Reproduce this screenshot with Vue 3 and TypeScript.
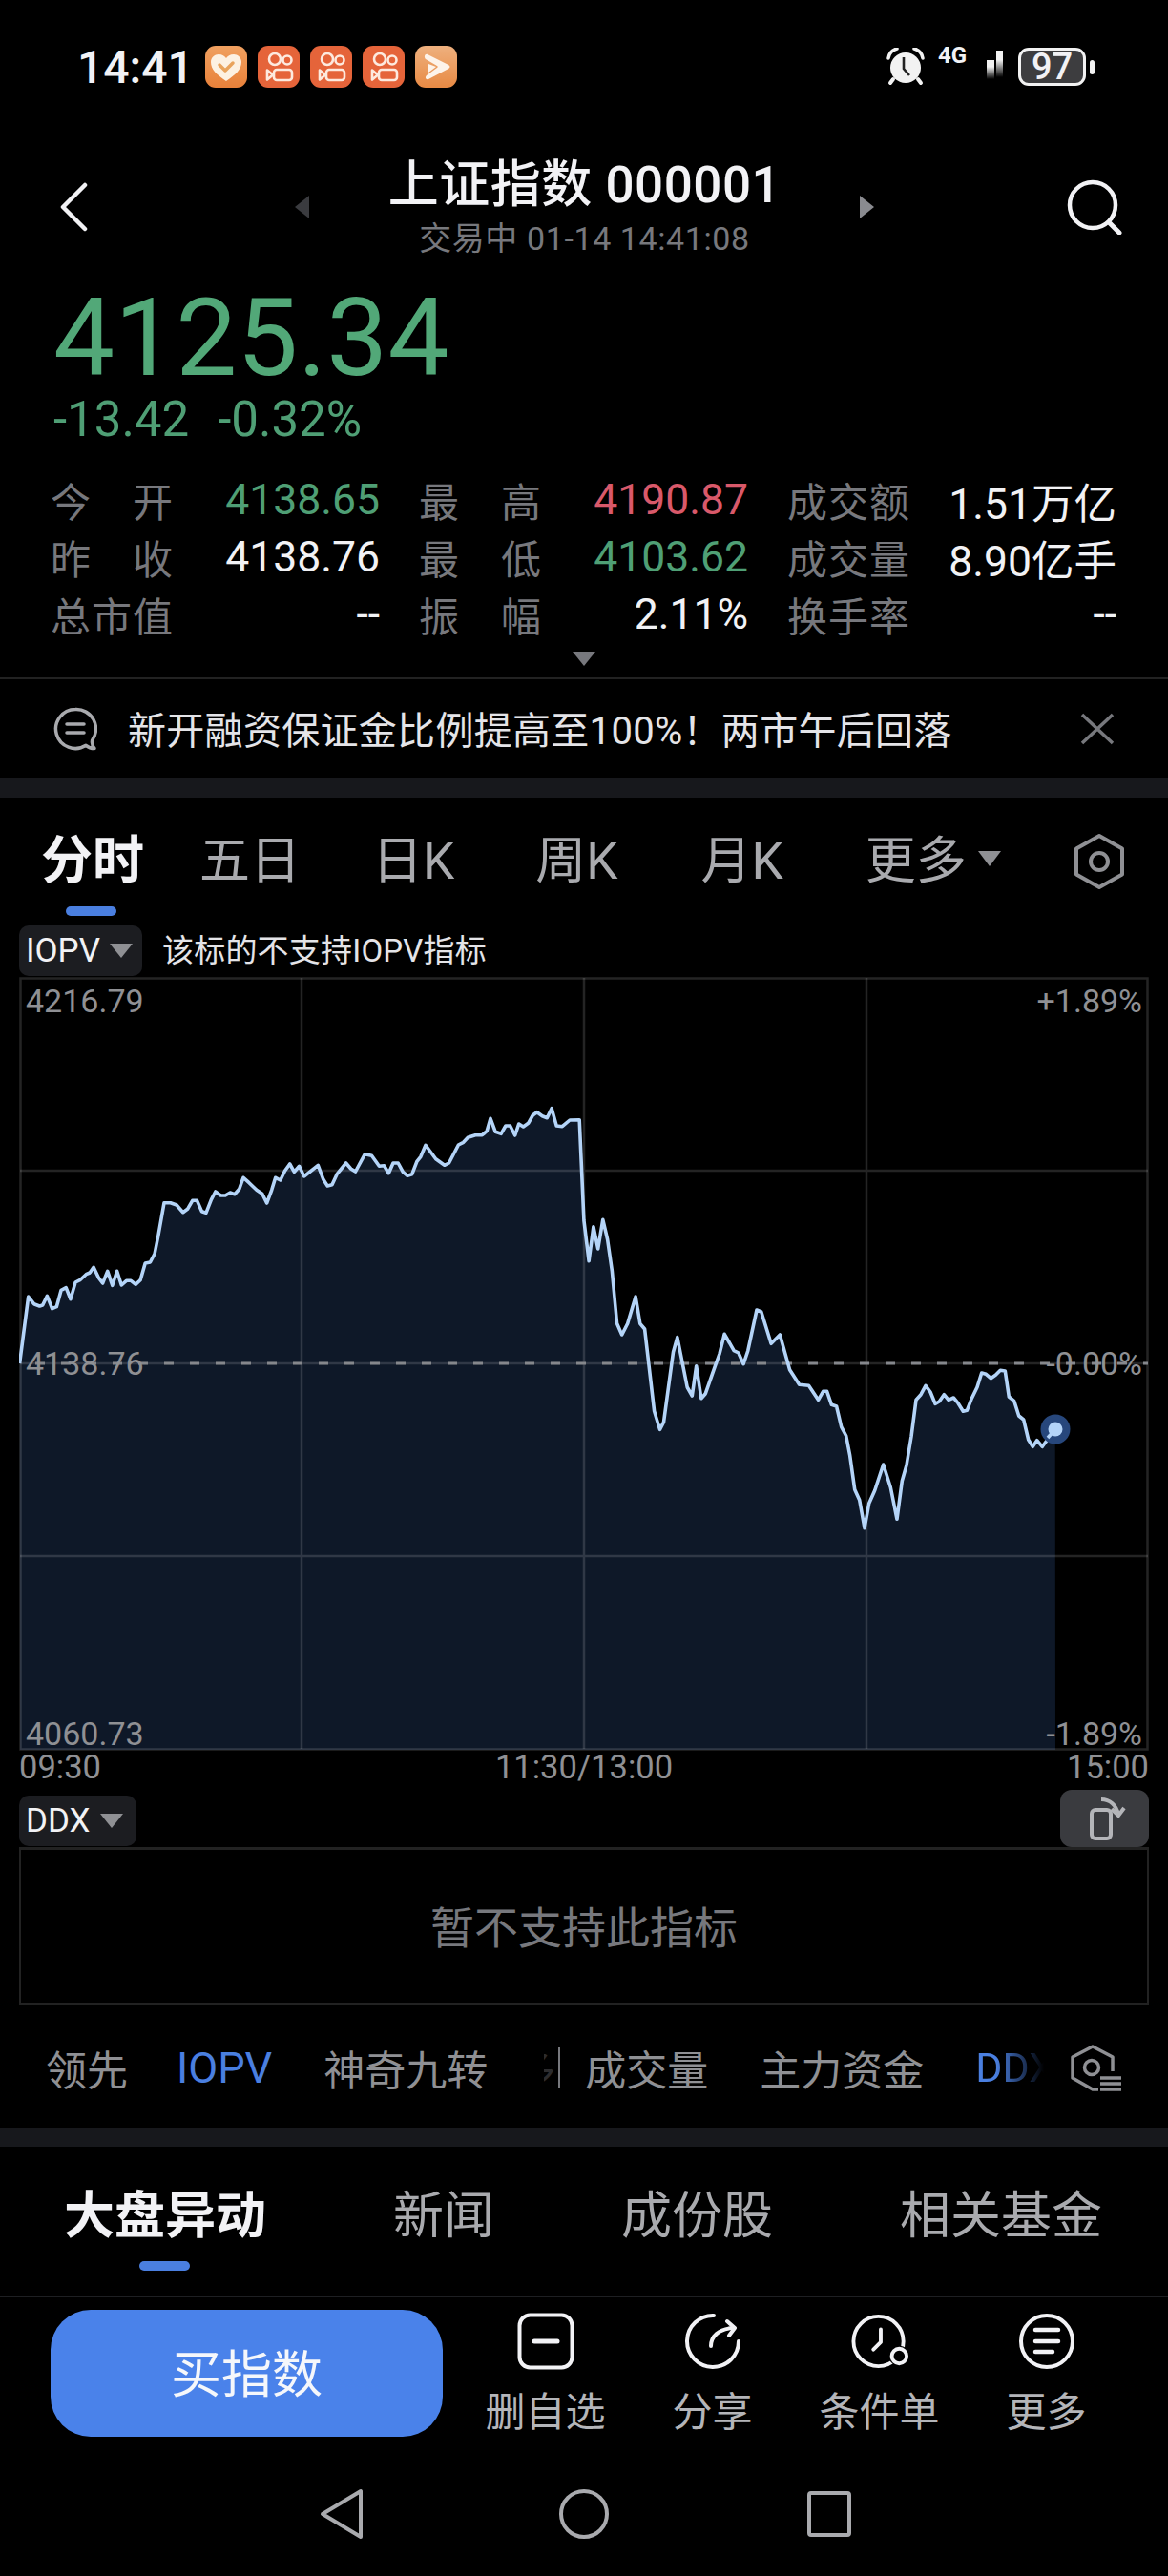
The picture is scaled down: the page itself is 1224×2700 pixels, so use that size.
<template>
  <div class="page">
    <!-- status bar -->
    <div class="status">
      <span class="clock">14:41</span>
      <div class="app-icons">
        <svg class="app" viewBox="0 0 44 44">
          <rect width="44" height="44" rx="11" fill="url(#gHeart)" />
          <path d="M22 37C12 30 6 25 6 17c0-5 4-8 8-8 4 0 6.500 2 8 4 1.500-2 4-4 8-4 4 0 8 3 8 8 0 8-6 13-16 20z" fill="#fdf1e2" />
          <path d="M15 20l6 6 8-8" fill="none" stroke="#e9a35c" stroke-width="3.500" stroke-linecap="round" stroke-linejoin="round" />
        </svg>
        <svg v-for="n in 3" :key="n" class="app" viewBox="0 0 44 44">
          <rect width="44" height="44" rx="11" fill="#e5643a" />
          <g fill="none" stroke="#fdeadf" stroke-width="2.600" stroke-linejoin="round">
            <circle cx="18" cy="14" r="6" />
            <circle cx="31" cy="15" r="4.500" />
            <rect x="17" y="25" width="19" height="11" rx="3" />
            <path d="M10 25.500l6 5-6 5z" />
          </g>
        </svg>
        <svg class="app" viewBox="0 0 44 44">
          <rect width="44" height="44" rx="11" fill="url(#gPlay)" />
          <path d="M13 9l22 11c2 1 2 3 0 4L14 35c-3 1-4-2-2-4l11-8c1-1 1-1 0-2L11 14c-2-2-1-6 2-5z" fill="#fdf3ea" />
          <path d="M14 19l8 3-8 6z" fill="#fdf3ea" />
        </svg>
      </div>
      <div class="status-right">
        <svg class="alarm" viewBox="0 0 40 40">
          <path d="M2 11C3 5 7 2 11 1M38 11C37 5 33 2 29 1" fill="none" stroke="#f2f2f2" stroke-width="3.500" stroke-linecap="round" />
          <path d="M7 33l-3 4M33 33l3 4" stroke="#f2f2f2" stroke-width="4" stroke-linecap="round" />
          <circle cx="20" cy="21" r="16" fill="#f2f2f2" />
          <path d="M18 10v12l6 7" fill="none" stroke="#222" stroke-width="2.600" />
        </svg>
        <span class="net">4G</span>
        <svg class="signal" viewBox="0 0 20 32">
          <defs>
            <linearGradient id="gBar" x1="0" y1="0" x2="0" y2="1">
              <stop offset="0.350" stop-color="#f2f2f2" />
              <stop offset="1" stop-color="#f2f2f2" stop-opacity="0" />
            </linearGradient>
          </defs>
          <rect x="1" y="10" width="8" height="20" fill="url(#gBar)" />
          <rect x="11" y="0" width="7" height="28" fill="url(#gBar)" />
        </svg>
        <div class="battery"><span>97</span></div>
        <i class="nub"></i>
      </div>
    </div>

    <!-- title -->
    <div class="nav">
      <svg class="back" viewBox="0 0 30 52">
        <path d="M27 3L4 26l23 23" fill="none" stroke="#f2f2f5" stroke-width="4.500" stroke-linecap="round" stroke-linejoin="round" />
      </svg>
      <div class="nav-mid">
        <i class="tri-left"></i>
        <div class="title-box">
          <div class="title">上证指数 000001</div>
          <div class="subtitle">交易中 01-14 14:41:08</div>
        </div>
        <i class="tri-right"></i>
      </div>
      <svg class="search" viewBox="0 0 60 58">
        <circle cx="28" cy="27" r="24" fill="none" stroke="#f2f2f5" stroke-width="4.500" />
        <path d="M45 45l11 11" stroke="#f2f2f5" stroke-width="5" stroke-linecap="round" />
      </svg>
    </div>

    <!-- quote -->
    <div class="quote">
      <div class="price">4125.34</div>
      <div class="change"><span>-13.42</span><span>-0.32%</span></div>
    </div>

    <div class="stats">
      <div v-for="s in stats" :key="s.label" class="stat">
        <span class="stat-label">{{ s.label }}</span>
        <span class="stat-value" :class="s.tone">{{ s.value }}</span>
      </div>
    </div>
    <div class="expand"><i></i></div>

    <!-- news -->
    <div class="news">
      <svg class="news-icon" viewBox="0 0 46 46">
        <path d="M23 2.500a20.500 20.500 0 1 0 11 37.800c2 1.700 5 3.200 9 3.200-1.800-2-3-5-2.400-8.500A20.500 20.500 0 0 0 23 2.500z" fill="none" stroke="#a9aaae" stroke-width="3.500" stroke-linejoin="round" />
        <path d="M14 18h18M14 27h18" stroke="#a9aaae" stroke-width="3.500" stroke-linecap="round" />
      </svg>
      <span class="news-text">新开融资保证金比例提高至100%！两市午后回落</span>
      <svg class="news-close" viewBox="0 0 36 34">
        <path d="M2 2l32 30M34 2L2 32" stroke="#77787d" stroke-width="3.500" />
      </svg>
    </div>
    <div class="band"></div>

    <!-- period tabs -->
    <div class="periods">
      <span class="period active">分时</span>
      <span class="period five">五日</span>
      <span class="period day">日K</span>
      <span class="period week">周K</span>
      <span class="period month">月K</span>
      <span class="period more">更多<i></i></span>
      <svg class="hex" viewBox="0 0 56 60">
        <path d="M28 3l24 13.500v27L28 57 4 43.500v-27z" fill="none" stroke="#8f9094" stroke-width="4" stroke-linejoin="round" />
        <circle cx="28" cy="30" r="9" fill="none" stroke="#8f9094" stroke-width="4" />
      </svg>
    </div>
    <div class="bar-wrap first"><i class="underline"></i></div>

    <div class="chip-row">
      <div class="chip wide">IOPV<i></i></div>
      <span class="note">该标的不支持IOPV指标</span>
    </div>

    <!-- intraday chart -->
    <div class="chart">
      <svg class="plot" viewBox="20 1025 1184 811">
        <path :d="areaPath" fill="#0e1828" />
        <g stroke="rgba(255,255,255,0.14)" stroke-width="2.500" fill="none">
          <rect x="21.500" y="1026.500" width="1181" height="808" />
          <path d="M316 1026V1834M612 1026V1834M908 1026V1834M21 1228H1203M21 1632H1203M21 1430H1203" />
        </g>
        <path d="M21 1430H1203" stroke="#85878c" stroke-width="3" stroke-dasharray="10 17" stroke-dashoffset="-16" />
        <path :d="linePath" fill="none" stroke="#b4d4f8" stroke-width="3.600" stroke-linejoin="round" />
        <circle cx="1106" cy="1499" r="15.500" fill="#27477c" />
        <path d="M1106 1499l-8 9" stroke="#b4d4f8" stroke-width="3.600" />
        <circle cx="1106" cy="1499" r="7.500" fill="#b4d4f8" />
      </svg>
      <span class="tag l top">4216.79</span>
      <span class="tag r top">+1.89%</span>
      <span class="tag l mid">4138.76</span>
      <span class="tag r mid">-0.00%</span>
      <span class="tag l bottom">4060.73</span>
      <span class="tag r bottom">-1.89%</span>
    </div>
    <div class="axis"><span>09:30</span><span>11:30/13:00</span><span>15:00</span></div>

    <div class="ddx-row">
      <div class="chip">DDX<i></i></div>
      <div class="rotate">
        <svg viewBox="0 0 93 60">
          <rect x="33" y="21" width="20" height="30" rx="4" fill="none" stroke="#b4b5b9" stroke-width="4" />
          <path d="M43 10c9 0 16 6 18 16" fill="none" stroke="#b4b5b9" stroke-width="4" />
          <path d="M54 20l7 7 6-8" fill="none" stroke="#b4b5b9" stroke-width="4" />
        </svg>
      </div>
    </div>
    <div class="empty-box">暂不支持此指标</div>

    <!-- indicator tabs -->
    <div class="indicators">
      <span class="lead">领先</span>
      <span class="on iopv">IOPV</span>
      <span>神奇九转</span>
      <span class="cut">多</span>
      <i class="sep"></i>
      <span>成交量</span>
      <span>主力资金</span>
      <span class="on fade">DDX</span>
      <svg class="ind-icon" viewBox="0 0 54 50">
        <path d="M44 28V13L23 2 2 13v22l21 12h6" fill="none" stroke="#8f9094" stroke-width="3.500" stroke-linejoin="round" />
        <circle cx="22" cy="24" r="7.500" fill="none" stroke="#8f9094" stroke-width="3.500" />
        <path d="M31 35h22M31 41h22M31 47h22" stroke="#8f9094" stroke-width="3.500" />
      </svg>
    </div>
    <div class="band second"></div>

    <!-- lower tabs -->
    <div class="lower-tabs">
      <span class="active">大盘异动</span>
      <span>新闻</span>
      <span>成份股</span>
      <span>相关基金</span>
    </div>
    <div class="bar-wrap last"><i class="underline"></i></div>

    <!-- action bar -->
    <div class="actions">
      <button class="buy">买指数</button>
      <div class="action-grid">
        <div class="action">
          <svg viewBox="0 0 60 60">
            <rect x="2.500" y="2.500" width="55" height="55" rx="11" fill="none" stroke="#f2f2f5" stroke-width="4" />
            <path d="M18 30h24" stroke="#f2f2f5" stroke-width="5" stroke-linecap="round" />
          </svg>
          <span>删自选</span>
        </div>
        <div class="action">
          <svg viewBox="0 0 60 60">
            <path d="M31 3A27 27 0 1 0 57 30" fill="none" stroke="#f2f2f5" stroke-width="4" stroke-linecap="round" />
            <path d="M28 35c0-10 8-18 23-19" fill="none" stroke="#f2f2f5" stroke-width="4" stroke-linecap="round" />
            <path d="M45 9l8 7-6 8" fill="none" stroke="#f2f2f5" stroke-width="4" stroke-linecap="round" stroke-linejoin="round" />
          </svg>
          <span>分享</span>
        </div>
        <div class="action">
          <svg viewBox="0 0 62 60">
            <circle cx="29.500" cy="30" r="27" fill="none" stroke="#f2f2f5" stroke-width="4" />
            <path d="M32 17v14l-8 8" fill="none" stroke="#f2f2f5" stroke-width="4" stroke-linecap="round" stroke-linejoin="round" />
            <circle cx="52" cy="46" r="11" fill="#000" />
            <circle cx="52" cy="46" r="8" fill="#000" stroke="#f2f2f5" stroke-width="4" />
          </svg>
          <span>条件单</span>
        </div>
        <div class="action">
          <svg viewBox="0 0 60 60">
            <circle cx="30" cy="30" r="27" fill="none" stroke="#f2f2f5" stroke-width="4" />
            <path d="M18 18h24M18 30h24M18 41h18" stroke="#f2f2f5" stroke-width="4.500" stroke-linecap="round" />
          </svg>
          <span>更多</span>
        </div>
      </div>
    </div>

    <!-- android navigation -->
    <div class="sysnav">
      <svg class="sys-back" viewBox="0 0 46 54">
        <path d="M43 3v48L3 27z" fill="none" stroke="#a9aaae" stroke-width="4" stroke-linejoin="round" />
      </svg>
      <svg class="sys-home" viewBox="0 0 52 54">
        <circle cx="26" cy="27" r="24" fill="none" stroke="#a9aaae" stroke-width="4" />
      </svg>
      <svg class="sys-recent" viewBox="0 0 46 48">
        <rect x="2" y="2" width="42" height="44" rx="2" fill="none" stroke="#a9aaae" stroke-width="4" />
      </svg>
    </div>

    <svg class="defs" width="0" height="0">
      <defs>
        <linearGradient id="gHeart" x1="0" y1="0" x2="0" y2="1">
          <stop offset="0" stop-color="#f0a060" />
          <stop offset="1" stop-color="#e8813a" />
        </linearGradient>
        <linearGradient id="gPlay" x1="0" y1="0" x2="0" y2="1">
          <stop offset="0" stop-color="#eeb07e" />
          <stop offset="1" stop-color="#e88a44" />
        </linearGradient>
      </defs>
    </svg>
  </div>
</template>

<script setup lang="ts">
interface Stat {
  label: string
  value: string
  tone?: 'green' | 'red'
}

const stats: Stat[] = [
  { label: '今开', value: '4138.65', tone: 'green' },
  { label: '最高', value: '4190.87', tone: 'red' },
  { label: '成交额', value: '1.51万亿' },
  { label: '昨收', value: '4138.76' },
  { label: '最低', value: '4103.62', tone: 'green' },
  { label: '成交量', value: '8.90亿手' },
  { label: '总市值', value: '--' },
  { label: '振幅', value: '2.11%' },
  { label: '换手率', value: '--' }
]

// traced from the session, [x, y] pairs in three different crops
const morning = [52,1290,75,1080,90,1103,105,1110,113,1107,125,1078,138,1118,150,1112,162,1060,175,1052,187,1088,200,1035,212,1028,228,1010,238,1005,248,988,262,1022,272,1038,285,1000,298,1045,310,1000,322,1044,335,1030,347,1030,360,1042,372,1028,385,975,398,972,410,945,420,885,435,785,452,785,468,792,485,815,497,805,510,778,522,778,535,812,546,817,560,775,571,750,585,762,597,762,610,753,622,758,634,742,645,706,660,722,680,745,695,757,707,786,720,745,730,706,743,714,755,685,768,663,780,688,793,670,806,702,843,667,857,712,868,732,880,728,893,695,917,660,930,678,942,687,967,632,985,637,1005,670,1018,668,1030,692,1042,660,1055,660,1068,688,1080,700,1092,695,1105,655,1115,640,1128,604,1155,647,1178,667,1190,660,1215,603,1228,595,1240,580,1260,572,1278,572,1290,560,1300,520,1313,562,1328,568,1340,543,1352,543,1365,573,1375,537,1387,546,1400,535,1412,510,1423,500,1437,512,1450,518,1462,488,1475,543,1490,545,1510,525,1535,524]
const midday = [18,524,30,840,43,968,55,860,67,930,80,838,92,900,104,1000,117,1165,130,1200,145,1165,166,1080,178,1165,190,1182,215,1440,230,1498,240,1475,265,1255,276,1208,302,1365,315,1392,326,1298,339,1400,350,1385,375,1300,387,1260,400,1198,425,1250,437,1257,450,1292,462,1250,485,1122,497,1128,523,1228,546,1200,572,1310,597,1357,622,1360,647,1405,660,1378,670,1378,682,1420,695,1425,708,1490]
const afternoon = [260,318,272,380,287,487,302,520,318,608,332,530,350,490,377,408,400,480,420,580,436,460,450,410,465,320,480,205,495,188,510,160,525,180,540,217,553,210,568,188,582,205,598,198,612,215,628,241,640,238,655,200,672,165,686,120,700,124,715,137,730,127,745,112,760,114,772,195,788,208,803,255,818,267,833,330,847,352,860,332,877,352,917,297]

function toPoints(raw: number[], ox: number, oy: number, sx: number): string[] {
  const out: string[] = []
  for (let i = 0; i < raw.length; i += 2) {
    out.push(`${(ox + raw[i] / sx).toFixed(1)} ${(oy + raw[i + 1] / 3).toFixed(1)}`)
  }
  return out
}

const points = [
  ...toPoints(morning, 0, 1000, 2.529),
  ...toPoints(midday, 600, 1000, 2.513),
  ...toPoints(afternoon, 800, 1400, 3)
]
const linePath = 'M' + points.join('L')
const areaPath = `${linePath}L1106 1835L21 1835Z`
</script>

<style>
html,
body {
  margin: 0;
  background: #000;
}
</style>

<style scoped>
.page {
  width: 1224px;
  height: 2700px;
  overflow: hidden;
  background: #000;
  color: #f2f2f5;
  font-family: Roboto, "Noto Sans CJK SC", sans-serif;
}

.status {
  height: 140px;
  display: flex;
  align-items: center;
  padding-left: 81px;
  padding-right: 77px;
}

.clock {
  font-size: 48px;
  font-weight: 500;
  width: 134px;
}

.app-icons {
  display: flex;
  gap: 11px;
}

.app {
  width: 44px;
  height: 44px;
}

.status-right {
  margin-left: auto;
  display: flex;
  align-items: center;
}

.alarm {
  width: 40px;
  height: 40px;
}

.net {
  font-size: 24px;
  font-weight: 700;
  width: 30px;
  margin-left: 14px;
  margin-right: 20px;
  align-self: flex-start;
  line-height: 20px;
  margin-top: -2px;
}

.signal {
  width: 20px;
  height: 32px;
  margin-top: -2px;
}

.battery {
  width: 71px;
  height: 40px;
  box-sizing: border-box;
  margin-left: 14px;
  border: 3px solid #f2f2f2;
  border-radius: 11px;
  background: #3d3d3f;
  display: flex;
  align-items: center;
  justify-content: center;
  font-size: 38px;
  font-weight: 500;
  line-height: 1;
}

.nub {
  width: 5px;
  height: 15px;
  margin-left: 4px;
  border-radius: 3px;
  background: #f2f2f2;
}

.nav {
  height: 154px;
  display: flex;
  align-items: center;
}

.back {
  width: 30px;
  height: 52px;
  margin-left: 62px;
  flex: none;
}

.nav-mid {
  width: 607px;
  margin-left: 217px;
  display: flex;
  align-items: center;
  justify-content: space-between;
}

.title-box {
  text-align: center;
}

.title {
  font-size: 53px;
  font-weight: 500;
  line-height: 66px;
  letter-spacing: 0.5px;
}

.subtitle {
  font-size: 34px;
  line-height: 46px;
  letter-spacing: 0.6px;
  color: #77787d;
}

.tri-left,
.tri-right {
  width: 0;
  height: 0;
  border-top: 12px solid transparent;
  border-bottom: 12px solid transparent;
}

.tri-left {
  border-right: 15px solid #3a3b3f;
}

.tri-right {
  border-left: 15px solid #8a8b90;
}

.search {
  width: 60px;
  height: 58px;
  margin-left: auto;
  margin-right: 47px;
}

.quote {
  height: 199px;
  padding-left: 56px;
}

.price {
  font-size: 114px;
  line-height: 120px;
  color: #52a878;
}

.change {
  display: flex;
  gap: 30px;
  font-size: 51px;
  line-height: 52px;
  color: #4f9f75;
}

.stats {
  display: grid;
  grid-template-columns: repeat(3, 345px);
  column-gap: 41px;
  grid-auto-rows: 60px;
  padding-left: 53px;
}

.stat {
  display: flex;
  align-items: center;
  justify-content: space-between;
  font-size: 44.500px;
}

.stat-label {
  width: 128px;
  font-size: 42px;
  text-align: justify;
  text-align-last: justify;
  color: #77787d;
}

.stat-value {
  color: #f2f2f5;
  padding-top: 2px;
}

.stat-value.green {
  color: #4f9f75;
}

.stat-value.red {
  color: #d9596a;
}

.expand {
  height: 39px;
  display: flex;
  justify-content: center;
  padding-top: 10px;
  box-sizing: border-box;
  border-bottom: 2px solid #222;
}

.expand i {
  width: 0;
  height: 0;
  border-left: 12px solid transparent;
  border-right: 12px solid transparent;
  border-top: 15px solid #77787d;
}

.news {
  height: 103px;
  display: flex;
  align-items: center;
  padding: 0 56px;
}

.news-icon {
  width: 46px;
  height: 46px;
  flex: none;
}

.news-text {
  margin-left: 32px;
  font-size: 40px;
  letter-spacing: 0.3px;
  color: #e4e4e8;
  margin-top: -2px;
}

.news-close {
  width: 36px;
  height: 34px;
  margin-left: auto;
}

.band {
  height: 21px;
  background: #17181c;
}

.band.second {
  height: 20px;
}

.periods {
  height: 60px;
  padding: 37px 44px 0 43px;
  display: flex;
  align-items: center;
  gap: 80px;
  color: #a9aaae;
}

.period {
  font-size: 53px;
  line-height: 60px;
  white-space: nowrap;
}

.period.active {
  font-size: 54px;
  font-weight: 700;
  color: #f2f2f5;
  margin-right: -22px;
}

.period.five {
  margin-right: -5px;
}

.period.day {
  margin-right: 5px;
}

.period.week {
  margin-right: 7px;
}

.period.month {
  margin-right: -4px;
}

.period.more {
  display: flex;
  align-items: center;
  margin-left: 10px;
  margin-right: -50px;
}

.period.more i {
  width: 0;
  height: 0;
  margin-left: 12px;
  margin-top: -6px;
  border-left: 12px solid transparent;
  border-right: 12px solid transparent;
  border-top: 16px solid #8f9094;
}

.hex {
  width: 56px;
  height: 60px;
  margin-left: auto;
  flex: none;
}

.bar-wrap {
  height: 10px;
}

.bar-wrap.first {
  margin-top: 17px;
  padding-left: 69px;
  margin-bottom: 10px;
}

.bar-wrap.last {
  margin-top: 22px;
  padding-left: 146px;
  height: 36px;
  border-bottom: 2px solid #1e1f22;
}

.underline {
  display: block;
  width: 53px;
  height: 10px;
  border-radius: 5px;
  background: #4a7fe0;
}

.chip-row {
  height: 54px;
  padding-left: 20px;
  display: flex;
  align-items: flex-start;
}

.chip {
  width: 123px;
  height: 53px;
  box-sizing: border-box;
  padding-left: 7px;
  display: flex;
  align-items: center;
  border-radius: 10px;
  background: #1c1d21;
  font-size: 35px;
}

.chip.wide {
  width: 129px;
}

.chip i {
  width: 0;
  height: 0;
  margin-left: 10px;
  border-left: 12px solid transparent;
  border-right: 12px solid transparent;
  border-top: 15px solid #8f9094;
}

.note {
  margin-left: 21px;
  font-size: 33px;
  line-height: 53px;
  letter-spacing: 0.2px;
  color: #e4e4e8;
}

.chart {
  position: relative;
  width: 1184px;
  height: 811px;
  margin-left: 20px;
}

.plot {
  display: block;
  width: 1184px;
  height: 811px;
}

.tag {
  position: absolute;
  font-size: 34px;
  line-height: 40px;
  color: #8f9094;
}

.tag.l {
  left: 7px;
}

.tag.r {
  right: 7px;
}

.tag.top {
  top: 5px;
}

.tag.mid {
  top: 385px;
}

.tag.bottom {
  top: 773px;
}

.axis {
  height: 40px;
  width: 1184px;
  margin-left: 20px;
  display: flex;
  justify-content: space-between;
  font-size: 34.500px;
  line-height: 34px;
  color: #8f9094;
}

.ddx-row {
  height: 61px;
  padding: 0 20px;
  display: flex;
  justify-content: space-between;
  align-items: flex-end;
}

.ddx-row .chip {
  margin-bottom: 1px;
}

.rotate {
  width: 93px;
  height: 60px;
  border-radius: 12px;
  background: #3a3b3f;
}

.rotate svg {
  display: block;
  width: 93px;
  height: 60px;
}

.empty-box {
  width: 1184px;
  height: 166px;
  box-sizing: border-box;
  margin-left: 20px;
  padding-bottom: 5px;
  border: 2px solid #222;
  border-top-width: 3px;
  border-bottom-width: 3px;
  display: flex;
  align-items: center;
  justify-content: center;
  font-size: 46px;
  color: #77787d;
}

.indicators {
  position: relative;
  height: 128px;
  padding: 2px 0 0 48px;
  box-sizing: border-box;
  display: flex;
  align-items: center;
  gap: 54px;
  font-size: 43px;
  color: #8f9094;
}

.indicators span {
  white-space: nowrap;
}

.indicators .on {
  color: #4a7fe0;
}

.indicators .lead {
  margin-right: -3px;
}

.indicators .iopv {
  font-size: 45px;
  line-height: 1;
}

.indicators .cut {
  width: 12px;
  margin-left: 5px;
  overflow: hidden;
  color: #2c2c2e;
  direction: rtl;
}

.sep {
  width: 2px;
  height: 42px;
  margin-left: -51px;
  margin-right: -28px;
  background: #77787d;
}

.indicators .fade {
  width: 72px;
  overflow: hidden;
  -webkit-mask-image: linear-gradient(90deg, #000 30%, transparent 100%);
  mask-image: linear-gradient(90deg, #000 30%, transparent 100%);
}

.ind-icon {
  position: absolute;
  left: 1122px;
  top: 41px;
  width: 54px;
  height: 50px;
}

.lower-tabs {
  height: 60px;
  padding: 38px 0 0 67px;
  display: flex;
  align-items: center;
  gap: 133px;
  font-size: 53px;
  color: #a9aaae;
}

.lower-tabs .active {
  font-weight: 700;
  color: #f2f2f5;
}

.actions {
  height: 182px;
  box-sizing: border-box;
  padding: 13px 0 0 53px;
  display: flex;
  align-items: flex-start;
}

.buy {
  width: 411px;
  height: 133px;
  border: none;
  border-radius: 42px;
  padding: 0 0 6px;
  background: #4a82ea;
  color: #f5f7fb;
  font-family: inherit;
  font-size: 53px;
}

.action-grid {
  margin-left: 20px;
  display: grid;
  grid-template-columns: repeat(4, 175px);
}

.action {
  padding-top: 3px;
  display: flex;
  flex-direction: column;
  align-items: center;
  font-size: 42px;
  line-height: 50px;
  color: #b4b5b9;
}

.action svg {
  width: 60px;
  height: 60px;
  margin-bottom: 20px;
}

.sysnav {
  height: 90px;
  padding-left: 335px;
  display: flex;
  align-items: center;
}

.sys-back {
  width: 46px;
  height: 54px;
}

.sys-home {
  width: 52px;
  height: 54px;
  margin-left: 205px;
}

.sys-recent {
  width: 46px;
  height: 48px;
  margin-left: 208px;
}

.defs {
  position: absolute;
}
</style>
